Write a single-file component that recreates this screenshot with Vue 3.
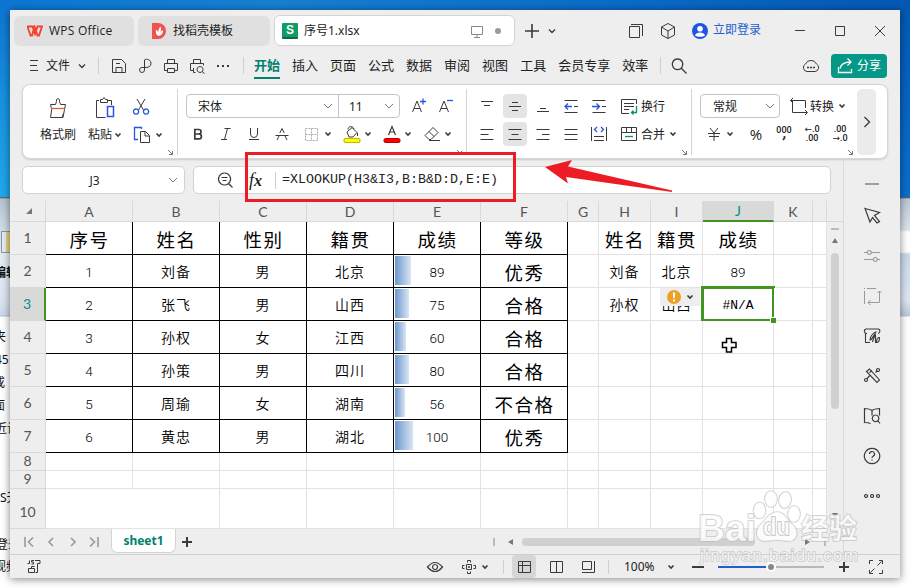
<template>
  <div class="desktop">
    <div class="strip strip-left">
      <i class="folder"></i>
      <span v-for="item in behind" :key="item.top" :class="{ strong: item.strong }" :style="{ top: item.top + 'px', left: item.left + 'px' }">{{ item.text }}</span>
    </div>
    <div class="strip strip-right"></div>

    <div class="window">
      <header class="titlebar">
        <div class="tab tab-home">
          <svg width="16" height="12" viewBox="0 0 16 12"><path d="M.5 1.500h5L8 9l2.500-7.500h4.500L12 10.500h-1.500L7.500 1.500 5 10.500H3.500z" fill="none" stroke="#f5402c" stroke-width="1.800" /></svg>
          <span class="latin">WPS Office</span>
        </div>
        <div class="tab tab-docer">
          <svg width="14" height="16" viewBox="0 0 14 16"><path d="M0 0h6a8 8 0 0 1 0 16H0z" fill="#ef5350" /><path d="M6.5 13C4 12 3.5 9 4 7c1.5.5 2.5 1.5 2.5 3C6 7 7 5 8.5 3.5 9.5 6 9 8 8 9.500 9 8 10 7.500 11 7.500c0 3-1.500 5-4.500 5.500z" fill="#fff" /></svg>
          <span>找稻壳模板</span>
        </div>
        <div class="tab tab-file">
          <span class="sheet-logo">S</span>
          <span class="file-name">序号1.xlsx</span>
          <Icon name="monitor" />
          <i class="dot"></i>
        </div>
        <Icon name="plus" class="new-tab" />
        <Icon name="chevron" class="tab-chevron" />
        <div class="title-right">
          <Icon name="windows" />
          <Icon name="cube" />
          <svg class="avatar" width="16" height="16" viewBox="0 0 16 16"><circle cx="8" cy="8" r="8" fill="#1f55e0" /><circle cx="8" cy="5.8" r="2.8" fill="#fff" /><path d="M3 12.5c1-4 9-4 10 0-2 1.800-8 1.800-10 0z" fill="#fff" /></svg>
          <span class="login">立即登录</span>
          <Icon name="minimize" />
          <Icon name="maximize" />
          <Icon name="close" />
        </div>
      </header>

      <nav class="menu">
        <Icon name="burger" />
        <span class="file-menu">文件</span>
        <Icon name="chevron" class="file-chevron" />
        <i class="vline"></i>
        <div class="quick">
          <Icon v-for="name in quickIcons" :key="name" :name="name" />
        </div>
        <i class="vline"></i>
        <ul class="menu-items">
          <li v-for="item in menuItems" :key="item" :class="{ current: item === activeMenu }" @click="activeMenu = item">{{ item }}</li>
        </ul>
        <i class="vline"></i>
        <Icon name="search" class="search" />
        <Icon name="cloud" class="cloud" />
        <button class="share"><Icon name="share" /><span>分享</span></button>
      </nav>

      <section class="ribbon">
        <div class="group g-clip">
          <div class="big"><Icon name="brush" /><span>格式刷</span></div>
          <div class="big"><Icon name="paste" /><span>粘贴<Icon name="caret" /></span></div>
          <div class="stack">
            <Icon name="cut" />
            <span><Icon name="copy" /><Icon name="caret" /></span>
          </div>
          <Icon name="corner" class="corner" />
        </div>
        <div class="group g-font">
          <div class="row">
            <div class="select font-name">宋体<Icon name="down" /></div>
            <div class="select font-size">11<Icon name="down" /></div>
            <Icon name="fontUp" class="font-up" />
            <Icon name="fontDown" class="font-down" />
          </div>
          <div class="row font-tools">
            <Icon v-for="(name, i) in fontTools" :key="i" :name="name" />
          </div>
          <Icon name="corner" class="corner" />
        </div>
        <div class="group g-align">
          <div class="row align-row">
            <span v-for="name in alignTop" :key="name" :class="{ on: name === 'vMiddle' }"><Icon :name="name" /></span>
            <Icon name="wrap" /><b>换行</b>
          </div>
          <div class="row align-row">
            <span v-for="name in alignBottom" :key="name" :class="{ on: name === 'hCenter' }"><Icon :name="name" /></span>
            <Icon name="merge" /><b>合并</b><Icon name="caret" />
          </div>
          <Icon name="corner" class="corner" />
        </div>
        <div class="group g-number">
          <div class="row">
            <div class="select number-format">常规<Icon name="down" /></div>
            <Icon name="convert" class="convert" /><b>转换</b><Icon name="caret" class="convert-caret" />
          </div>
          <div class="row number-row">
            <Icon name="yen" />
            <Icon name="caret" />
            <span class="percent">%</span>
            <span class="tiny">000<Icon name="comma" /></span>
            <span class="tiny">←.0<br />.00</span>
            <span class="tiny">.00<br />→.0</span>
          </div>
          <Icon name="corner" class="corner" />
        </div>
        <div class="more"><Icon name="right" /></div>
      </section>

      <div class="body">
        <main class="main">
          <div class="formula-row">
            <div class="name-box"><span>J3</span><Icon name="down" /></div>
            <div class="formula-box">
              <Icon name="zoomOut" class="zoom-out" />
              <span class="fx">f<em>x</em></span>
              <i class="vline"></i>
              <span class="formula">=XLOOKUP(H3&amp;I3,B:B&amp;D:D,E:E)</span>
            </div>
          </div>

          <div class="sheet-wrap">
            <div class="sheet">
              <div class="head head-corner"><svg width="8" height="8" viewBox="0 0 8 8"><path d="M7 1v6H1z" fill="#777" /></svg></div>
              <div v-for="col in columns" :key="col" class="head" :class="{ picked: col === 'J' }">{{ col }}</div>
              <template v-for="(row, r) in rows" :key="r">
                <div class="row-head" :class="{ picked: r === 2, tall: r === 9 }">{{ r + 1 }}</div>
                <div
                  v-for="(col, c) in columns"
                  :key="col"
                  class="cell"
                  :class="{ boxed: r < 7 && c < 6, big: isBig(r, c), num: isNumber(row[c]), merged: r === 9 && c === 0, active: r === 2 && col === 'J' }"
                >
                  <i v-if="c === 4 && r > 0 && row[c]" class="bar" :style="{ width: Math.round(row[c] * 0.18) + 'px' }"></i>
                  <span>{{ row[c] }}</span>
                  <i v-if="r === 2 && col === 'J'" class="handle"></i>
                </div>
              </template>
            </div>
            <div class="vscroll">
              <i class="split"></i>
              <i class="up"></i>
              <i class="thumb"></i>
              <i class="down"></i>
            </div>
          </div>

          <div class="sheet-bar">
            <Icon v-for="name in ['first', 'prev', 'next', 'last']" :key="name" :name="name" />
            <div class="sheet-tab">sheet1</div>
            <Icon name="plusBold" class="add-sheet" />
            <div class="hscroll">
              <i class="tick"></i>
              <i class="left"></i>
              <i class="thumb"></i>
              <i class="right"></i>
              <i class="tick"></i>
            </div>
          </div>
        </main>

        <aside class="side">
          <Icon v-for="name in sideIcons" :key="name" :name="name" />
        </aside>
      </div>

      <footer class="status">
        <Icon name="js" class="js" />
        <div class="status-right">
          <Icon name="eye" />
          <Icon name="target" class="target" />
          <Icon name="caret" />
          <i class="vline"></i>
          <span class="view on"><Icon name="viewNormal" /></span>
          <span class="view"><Icon name="viewPage" /></span>
          <span class="view"><Icon name="viewBreak" /></span>
          <i class="vline"></i>
          <span class="zoom-value">100%</span>
          <Icon name="caret" class="zoom-caret" />
          <Icon name="minusBold" />
          <div class="slider"><i></i></div>
          <Icon name="plusBold" class="zoom-in" />
          <Icon name="expand" class="expand" />
        </div>
      </footer>
    </div>

    <!-- error hint next to the active cell -->
    <div class="hint">
      <svg width="14" height="14" viewBox="0 0 14 14"><circle cx="7" cy="7" r="7" fill="#eea127" /><path d="M7 2.5v5.5M7 9.5v2" stroke="#fff" stroke-width="2" /></svg>
      <Icon name="caret" />
    </div>

    <!-- annotations, mouse cursor and watermark -->
    <svg class="overlay" width="910" height="588" viewBox="0 0 910 588">
      <rect x="246.5" y="153.5" width="268" height="47" fill="none" stroke="#ed1c24" stroke-width="3" />
      <path d="M545 167L572 160L568 166.5L672 190.5V192L566 177L568 183.5Z" fill="#ed1c24" />
      <path d="M726.5 338.5h5v4h4.500v5h-4.500v4.500h-5v-4.500h-4v-5h4z" fill="#fff" stroke="#000" stroke-width="1.5" />
      <g class="watermark">
        <text x="698" y="541" class="wm-big" textLength="58" lengthAdjust="spacingAndGlyphs">Bai</text>
        <ellipse cx="759.500" cy="510.500" rx="6" ry="8" />
        <ellipse cx="771" cy="499" rx="6" ry="8" />
        <ellipse cx="785" cy="500" rx="6" ry="8" transform="rotate(10 785 500)" />
        <ellipse cx="794" cy="514" rx="6" ry="8" />
        <path d="M777 512c8 0 10 8 15 12 8 7 5 17-3 17-5 0-8-1-12-1s-7 1-12 1c-9 0-11-10-4-17 5-4 8-12 16-12z" />
        <text x="763" y="535" class="wm-du" textLength="27" lengthAdjust="spacingAndGlyphs">du</text>
        <text x="801" y="539" class="wm-cjk">经验</text>
        <text x="700" y="561" class="wm-url" textLength="158">jingyan.baidu.com</text>
      </g>
    </svg>
  </div>
</template>

<script setup>
import { ref, h } from 'vue';

const blue = '#2456e0';
const green = '#0a9060';
const gray = '#999';

// Each icon is [width, height, ...paths]; a path is a string or { d, c: stroke, w: stroke width }
const icons = {
  monitor: [20, 20, { d: 'M4.5 5.5h11v8h-11zM10 13.5v3M7 16.5h6', c: '#888' }],
  plus: [20, 20, { d: 'M10 3v14M3 10h14', w: 1.6 }],
  plusBold: [12, 12, { d: 'M6 1v10M1 6h10', w: 2 }],
  minusBold: [12, 12, { d: 'M0 6h12', w: 2 }],
  chevron: [10, 10, { d: 'M2 3.5l3 3 3-3', w: 1.3 }],
  down: [12, 12, { d: 'M2 4l4 4 4-4', c: '#777' }],
  caret: [8, 8, { d: 'M1.5 2.5L4 5l2.5-2.5', w: 1.6 }],
  right: [12, 14, { d: 'M3.5 2l5 5-5 5', w: 1.3 }],
  windows: [20, 20, 'M3.5 5.5h10v11h-10zM5 3.5h11.5V15'],
  cube: [20, 20, 'M10 2.5l6.500 3.500v8L10 17.500 3.500 14V6zM3.500 6L10 10l6.500-4M10 10v7.500'],
  minimize: [40, 20, 'M15 9.5h10'],
  maximize: [40, 20, 'M15.5 5.5h9v9h-9z'],
  close: [40, 20, 'M15 5l10 10M25 5L15 15'],
  burger: [10, 14, 'M1 1.5h8M1 6.5h7M1 11.5h8'],
  save: [26, 20, 'M6.5 3.5h9l4 4v9h-13zM10 16.5v-5h6v5M10 7.5h4'],
  publish: [26, 20, 'M12.5 10V4c0-1 6-1.500 6.500 3 0 3-2 4.500-5 4.500H9.800a2.500 2.500 0 1 0 2.700 2.500V10'],
  print: [26, 20, 'M9.5 7V3.5h7V7M9 14.5H6.5V7.5h13v7H17M9.5 12.5h7v4h-7z'],
  preview: [26, 20, 'M9.5 7V3.5h7V7M10 14.5H6.5V7.5h13v2M9.5 12v4.5h2', 'M16 10.5a3 3 0 1 0 .1 0M18 15.5l2.500 2'],
  dots: [26, 20, { d: 'M7 10h2M12 10h2M17 10h2', w: 1.8 }],
  search: [20, 20, { d: 'M8.5 3a5.300 5.300 0 1 0 .1 0M12.500 12.500l5 5', w: 1.3 }],
  cloud: [20, 20, 'M6 15.5a4 4 0 0 1-1.500-7.500 6 6 0 0 1 11 0 4 4 0 0 1-1.500 7.500z', { d: 'M6 11.5h2M9 11.5h2M12 11.5h2', w: 1.6 }],
  share: [20, 20, { d: 'M3.5 11v5.500h13V13M5 12.500c1-5 5-6.500 11-6.500M12.500 2.500L16 6l-3.500 3.500', c: '#fff', w: 1.3 }],
  brush: [24, 24, 'M4.5 8.5h5l1-3V3.500q1.500-2 3 0v2l1 3h5l-1 5-1.500 8h-12.500l1.200-8zM16 21.500l1.500-4', { d: 'M5 12.500h13', c: '#d8623a', w: 1.3 }],
  paste: [24, 24, 'M6 4.5H3.5v17h9M14 4.5h4.5V9M7.5 3.5h2l1.500-2 1.500 2h2v3h-7z', { d: 'M14.5 10.5h6v10h-6z', c: blue, w: 1.5 }],
  cut: [20, 20, 'M6 2l6.500 11M14 2L7.500 13', { d: 'M5 12a2.600 2.600 0 1 0 .1 0M15 12a2.600 2.600 0 1 0 .1 0', c: blue, w: 1.3 }],
  copy: [20, 20, { d: 'M6 14.5H2.5v-12h7V4', c: blue, w: 1.3 }, 'M8.5 6.5h5l4 4v7h-9zM13 7v4h4'],
  corner: [7, 7, { d: 'M1 1l4.500 4.500M5.500 2v3.500H2', c: '#777' }],
  comma: [6, 6, { d: 'M3.5 1v2L2 5', w: 1.8 }],
  fontUp: [18, 18, 'M2.5 15L7 4l4.500 11M4 11.500h6', { d: 'M13 1.5v6M10 4.5h6', c: blue, w: 1.3 }],
  fontDown: [18, 18, 'M2.5 15L7 4l4.500 11M4 11.500h6', { d: 'M10 3.5h6', c: blue, w: 1.3 }],
  bold: [28, 20, { d: 'M10.8 5.500h4a2.200 2.200 0 0 1 0 4.500h-4zM10.800 10H15a2.300 2.300 0 0 1 0 4.800h-4.200z', w: 1.7 }],
  italic: [28, 20, 'M12.5 4.500h6M9 15.500h6M15.500 4.500l-3 11'],
  underline: [28, 20, 'M10.5 4v6a3.500 3.500 0 0 0 7 0V4M9 15.500h10'],
  strike: [28, 20, 'M7.5 11.500h13M11.800 9L14 4.500 16.200 9M11 12l-2 4M17 12l2 4'],
  border: [24, 20, { d: 'M5.5 4.500h12v12h-12zM11.500 4.500v12M5.500 10.500h12', c: '#aaa', dash: '2 1' }],
  fill: [24, 20, 'M7 8l5-4.500 5 5-4 4.500H9zM8 5.500C8 2 13 1.500 14 5M17.500 9v3', { d: 'M6 16.500h12', c: '#a5a500', w: 5, cap: 1 }, { d: 'M6 16.500h12', c: '#ff0', w: 3.5, cap: 1 }],
  color: [24, 20, { d: 'M8.5 11L12 2.500l3.500 8.500M9.800 8h4.400', w: 1.2 }, { d: 'M6 16.500h12', c: '#a00', w: 5, cap: 1 }, { d: 'M6 16.500h12', c: '#f00', w: 3.5, cap: 1 }],
  eraser: [24, 20, 'M5 11.500l8-8 5 5-7 7H9zM9 7.500l5 5M9 16.500h11'],
  vTop: [20, 20, 'M4 5.500h12M7 9.500h6'],
  vMiddle: [20, 20, 'M7 6.500h6M4 10.500h12M7 14.500h6'],
  vBottom: [20, 20, 'M7 12.500h6M4 15.500h12'],
  outdent: [20, 20, 'M3.5 4.500h13M13 10.500h4M3.500 16.500h13', { d: 'M11 10.500H4M7 7.500l-3 3 3 3', c: blue, w: 1.3 }],
  indent: [20, 20, 'M3.5 4.500h13M13 10.500h4M3.500 16.500h13', { d: 'M3 10.500h7M7.500 7.500l3 3-3 3', c: blue, w: 1.3 }],
  hLeft: [20, 20, 'M3.5 5.500h13M3.500 10.500h8M3.500 15.500h13'],
  hCenter: [20, 20, 'M3.5 5.500h13M6.500 10.500h7M3.500 15.500h13'],
  hRight: [20, 20, 'M3.5 5.500h13M9 10.500h7.500M3.500 15.500h13'],
  justify: [20, 20, 'M3.5 5.500h13M3.500 10.500h13M3.500 15.500h13'],
  distribute: [20, 20, 'M2.5 3v14M17.500 3v14M5 12.500h10M5 16.500h10', { d: 'M8 3L5.500 5.500 8 8M12 3l2.500 2.500L12 8', c: blue, w: 1.3 }],
  wrap: [20, 20, 'M17.5 8V3.500h-15v14H10M5 7.500h10M5 10.500h10M5 13.500h5', { d: 'M17.5 10v6.500h-5M14.500 14.500l-2 2 2 2', c: green, w: 1.3 }],
  merge: [20, 20, 'M2.5 3.500h15v13h-15zM2.500 8.500h15M7.500 3.500v5M12.500 3.500v5', { d: 'M6 12.500h8', c: green, w: 1.3 }],
  convert: [20, 20, 'M5.500 4.500h11V12M14 16.500H3.500V5M4 2L1.500 4.500 4 7M1.500 4.500H6M16 14l2.500 2.500L16 19M13 16.500h5'],
  yen: [20, 20, 'M6 4l4 5 4-5M4 9.500h12M5 12.500h10M10 9v8'],
  zoomOut: [20, 20, { d: 'M9.5 3a6 6 0 1 0 .1 0M13.500 13.500l4 4M6.500 7.500h6M7.500 10.500h4', w: 1.2 }],
  first: [22, 14, { d: 'M7 2v10M15 2.500L10.500 7l4.500 4.500', c: gray, w: 1.6 }],
  prev: [22, 14, { d: 'M13 3L9 7l4 4', c: gray, w: 1.6 }],
  next: [22, 14, { d: 'M9 3l4 4-4 4', c: gray, w: 1.6 }],
  last: [22, 14, { d: 'M14 2v10M6 2.500L10.500 7 6 11.500', c: gray, w: 1.6 }],
  dash: [20, 24, { d: 'M3 12h14', c: '#888', w: 1.6 }],
  pointer: [20, 40, { d: 'M3 12.500l14.500 4-5 3 5 6-2.500 1.500-4.500-5.500-2.500 4.500z', w: 1.2 }],
  sliders: [20, 40, { d: 'M2 16.500h3.500M9 16.500h9M2 23.500h9M15 23.500h3M7.300 14.500a2 2 0 1 0 .1 0M13.300 21.500a2 2 0 1 0 .1 0', c: gray, w: 1.2 }],
  transform: [20, 40, { d: 'M2.5 15v13M2 12.500h1M5 12.500h9M17.500 15v11M15.500 17l2-2 2 2M17.500 26.500H6M8.500 24L6 26.500l2.500 2.500', c: gray }],
  mural: [20, 40, { d: 'M5 17.500C2 18 1.500 13.500 4 13h12c3 .5 2 4 0 4.500M3.500 17.500v9H8M8 24c0-4 4-8 6-8-3 4-4 8-6 8zM10.500 26c1-4 2-6 3-7v8M14.500 26.500c0-4 2-5 3-5 0 3-1 5-3 5z', w: 1.1 }],
  tools: [20, 40, { d: 'M4.5 15.500l3-2.500 10 11-2.500 2.500zM8 19.500l-3 3M13.500 16.500l2-2M7.500 16.500l2.500-2M4 22.500a1.500 1.500 0 1 0 .1 0M16 12.500a1.500 1.500 0 1 0 .1 0', w: 1.1 }],
  book: [20, 40, { d: 'M10 14.500C8 12.500 5 13 2.500 12.500v14c2 0 4 0 6 1M10 14.500c2-2 5-1.500 7.500-2v7M10 14.500v5M13.500 19a3.300 3.300 0 1 0 .1 0M16 25l2 2.500', w: 1.2 }],
  help: [20, 40, { d: 'M10 12.300a7.700 7.700 0 1 0 .1 0M7.500 18a2.500 2.500 0 1 1 3.500 2.300q-1 .5-1 1.700M10 23.500v1', w: 1.2 }],
  ellipsis: [20, 40, { d: 'M4 18.500a1.500 1.500 0 1 0 .1 0M10 18.500a1.500 1.500 0 1 0 .1 0M16 18.500a1.500 1.500 0 1 0 .1 0', w: 1.2 }],
  js: [16, 16, 'M3.5 1.500v3H1.500M8 1.500H5.500V3h2v2H5.500M9 1.500h5v3h-2.500v9H9.500M2.500 13.500v-4h6v4zM5.500 9.500v-2h3'],
  eye: [18, 18, { d: 'M1.5 9q7.500-9 15 0-7.500 9-15 0zM9 6.500a2.500 2.500 0 1 0 .1 0', w: 1.2 }],
  target: [16, 16, 'M5.5 5.500h5v5h-5zM6.500 3.500v-2h3v2M6.500 12.500v2h3v-2M3.500 6.500h-2v3h2M12.500 6.500h2v3h-2M8 7v2M7 8h2'],
  viewNormal: [16, 16, 'M2.5 2.500h12v11h-12zM6.500 2.500v11M2.500 6.500h12'],
  viewPage: [16, 16, 'M2.5 2.500h12v11h-12zM8.500 2.500v11'],
  viewBreak: [16, 16, 'M2.5 2.500h9v8h-9zM14.500 2v11.500H2'],
  expand: [16, 16, 'M1.5 5V1.500H5M11 1.500h3.500V5M14.500 11v3.500H11M5 14.500H1.500V11M9.500 6.500l4-4M6.500 9.500l-4 4'],
};

const Icon = ({ name }) => {
  const [width, height, ...paths] = icons[name];
  return h('svg', { width, height, viewBox: `0 0 ${width} ${height}`, class: 'icon' }, paths.map((p) => {
    const o = typeof p === 'string' ? { d: p } : p;
    return h('path', {
      d: o.d,
      fill: 'none',
      stroke: o.c || '#3a3a3a',
      'stroke-width': o.w || 1,
      'stroke-dasharray': o.dash,
      'stroke-linecap': o.cap ? 'round' : undefined,
    });
  }));
};
Icon.props = ['name'];

const quickIcons = ['save', 'publish', 'print', 'preview', 'dots'];
const menuItems = ['开始', '插入', '页面', '公式', '数据', '审阅', '视图', '工具', '会员专享', '效率'];
const activeMenu = ref('开始');
const fontTools = ['bold', 'italic', 'underline', 'strike', 'border', 'caret', 'fill', 'caret', 'color', 'caret', 'eraser', 'caret'];
const alignTop = ['vTop', 'vMiddle', 'vBottom', 'outdent', 'indent'];
const alignBottom = ['hLeft', 'hCenter', 'hRight', 'justify', 'distribute'];
const sideIcons = ['dash', 'pointer', 'sliders', 'transform', 'mural', 'tools', 'book', 'help', 'ellipsis'];

const columns = ['A', 'B', 'C', 'D', 'E', 'F', 'G', 'H', 'I', 'J', 'K', ''];
const rows = ref([
  ['序号', '姓名', '性别', '籍贯', '成绩', '等级', '', '姓名', '籍贯', '成绩'],
  [1, '刘备', '男', '北京', 89, '优秀', '', '刘备', '北京', 89],
  [2, '张飞', '男', '山西', 75, '合格', '', '孙权', '山西', '#N/A'],
  [3, '孙权', '女', '江西', 60, '合格'],
  [4, '孙策', '男', '四川', 80, '合格'],
  [5, '周瑜', '女', '湖南', 56, '不合格'],
  [6, '黄忠', '男', '湖北', 100, '优秀'],
  [],
  [],
  [],
]);

const isBig = (r, c) => r === 0 || c === 5;
const isNumber = (value) => typeof value === 'number';

// pieces of the windows behind
const behind = [
  { text: '编辑', top: 264, left: -6, strong: true },
  { text: '夹', top: 328, left: -6 },
  { text: '45', top: 351, left: -5 },
  { text: '或', top: 374, left: -7 },
  { text: '面', top: 397, left: -7 },
  { text: '近设', top: 420, left: -5 },
  { text: 'S无', top: 489, left: 0 },
  { text: '登录', top: 536, left: -4 },
  { text: '视频', top: 558, left: -6 },
];
</script>

<style>
body {
  overflow: hidden;
}
</style>

<style scoped>
.desktop {
  position: relative;
  box-sizing: border-box;
  width: 910px;
  height: 588px;
  padding: 10px;
  background: linear-gradient(90deg, #0d76d4, #1680d2 30%, #0a6ac8 70%, #0459b4);
  font-family: "Noto Sans", "Noto Sans CJK SC", sans-serif;
  font-size: 12px;
  color: #222;
  overflow: hidden;
}
.desktop * {
  box-sizing: border-box;
}
i,
em,
b {
  font-style: normal;
  font-weight: normal;
}
.icon {
  flex: none;
  display: block;
}
.strip {
  position: absolute;
  top: 0;
  bottom: 0;
  width: 455px;
  clip-path: inset(10px 0 0 0);
}
.strip-left {
  left: 0;
  background: linear-gradient(#0e72d2, #1792e0 100px, #21a8ec 197px, #34495c 197px, #b4c2d0 199px, #d3dee9 230px, #e4edf5 254px, #dde6f0 300px, #ccd8ec 315px, #a9bdd2 316px, #fff 317px);
}
.strip-right {
  right: 0;
  background: linear-gradient(#0459b4, #0a6fd0 197px, #2c4560 197px, #b9c6d3 199px, #dce5ee 230px, #fff 232px, #fff 252px, #c9d9ea 254px, #dde6f4 300px, #b8c8da 316px, #fff 317px);
}
.strip span {
  position: absolute;
  font-size: 12px;
  line-height: 18px;
  color: #111;
  white-space: nowrap;
}
.strip .strong {
  font-weight: bold;
}
.folder {
  position: absolute;
  left: 1px;
  top: 231px;
  width: 14px;
  height: 22px;
  border: 1px solid #8a97a3;
  background: linear-gradient(90deg, #e6edf3 4px, #e5d283 4px);
}
.window {
  position: relative;
  width: 890px;
  height: 568px;
  display: flex;
  flex-direction: column;
  background: #eee;
  box-shadow: 0 1px 8px rgba(0, 0, 0, 0.5);
}
.titlebar {
  display: flex;
  align-items: center;
  height: 41px;
  padding-left: 4px;
}
.tab {
  display: flex;
  align-items: center;
  height: 30px;
  margin-right: 4px;
  border-radius: 6px;
  background: #e0e0e0;
  line-height: 30px;
}
.tab-home {
  width: 120px;
  padding-left: 13px;
  gap: 6px;
}
.tab-docer {
  width: 132px;
  padding-left: 14px;
  gap: 7px;
}
.latin {
  font-family: "Open Sans", sans-serif;
  letter-spacing: 0.25px;
}
.tab-file {
  width: 241px;
  height: 31px;
  margin-right: 0;
  padding-left: 7px;
  background: #fff;
  border: 1px solid #d4d4d4;
}
.sheet-logo {
  width: 16px;
  height: 16px;
  margin-right: 6px;
  border-radius: 1px;
  background: linear-gradient(#129b67 14px, #0b6b49 14px);
  color: #fff;
  font: bold 12px/15px "Liberation Sans", sans-serif;
  text-align: center;
}
.file-name {
  width: 163px;
}
.dot {
  width: 6px;
  height: 6px;
  margin-left: 8px;
  border-radius: 50%;
  background: #999;
}
.new-tab {
  margin-left: 7px;
}
.tab-chevron {
  margin-left: 5px;
}
.title-right {
  display: flex;
  align-items: center;
  margin-left: auto;
}
.title-right > .icon:nth-child(2) {
  margin: 0 14px 0 12px;
}
.login {
  width: 72px;
  padding: 0 0 1px 5px;
  color: #1f5fd0;
  line-height: 20px;
}
.menu {
  display: flex;
  align-items: center;
  height: 29px;
  padding-left: 19px;
}
.file-menu {
  margin-left: 7px;
  padding-bottom: 2px;
}
.file-chevron {
  margin: 0 11px 0 7px;
}
.vline {
  flex: none;
  width: 1px;
  height: 17px;
  background: #cfcfcf;
}
.quick {
  display: flex;
  margin: 0 7px;
}
.menu-items {
  display: flex;
  gap: 12px;
  margin: 0 12px 0 10px;
  padding: 0;
  list-style: none;
  font-size: 13px;
  line-height: 22px;
  white-space: nowrap;
}
.menu-items li {
  height: 27px;
  padding-top: 2px;
  border-bottom: 2px solid transparent;
}
.menu-items .current {
  color: #00806e;
  font-weight: bold;
  border-color: #00806e;
}
.search {
  margin-left: 8px;
}
.cloud {
  margin-left: auto;
  margin-right: 10px;
}
.share {
  display: flex;
  align-items: center;
  width: 56px;
  height: 24px;
  margin-right: 13px;
  padding: 0 0 0 4px;
  gap: 2px;
  border: 0;
  border-radius: 4px;
  background: #069887;
  color: #fff;
  font: inherit;
  white-space: nowrap;
}
.share span {
  padding-bottom: 2px;
}
.ribbon {
  display: flex;
  flex: none;
  height: 75px;
  margin: 4px 12px 0 12px;
  padding-top: 4px;
  border: 1px solid #d6d6d6;
  border-radius: 8px;
  background: #fff;
  box-shadow: 0 1px 2px rgba(0, 0, 0, 0.15);
}
.group {
  position: relative;
  height: 66px;
  border-right: 1px solid #d4d4d4;
}
.group .corner {
  position: absolute;
  right: 3px;
  bottom: -1px;
}
.g-clip {
  display: flex;
  width: 155px;
}
.g-font {
  width: 289px;
}
.g-align {
  width: 225px;
}
.g-number {
  width: 165px;
  border: 0;
}
.big {
  display: flex;
  flex-direction: column;
  align-items: center;
}
.g-clip .big {
  width: 36px;
  margin-left: 17px;
  padding-top: 7px;
  white-space: nowrap;
}
.g-clip .big span {
  display: flex;
  align-items: center;
  gap: 2px;
  margin-top: 6px;
  line-height: 18px;
}
.g-clip .big + .big {
  width: 34px;
  margin-left: 12px;
}
.stack {
  margin-left: 9px;
  padding-top: 8px;
}
.stack > span {
  display: flex;
  align-items: center;
  gap: 3px;
  margin: 8px 0 0 1px;
}
.row {
  display: flex;
  align-items: center;
  height: 24px;
  margin-bottom: 4px;
}
.group > .row:first-child {
  margin-top: 5px;
}
.select {
  display: flex;
  align-items: center;
  justify-content: space-between;
  height: 24px;
  padding: 0 4px 0 11px;
  border: 1px solid #c4c4c4;
  background: #fff;
}
.font-name {
  width: 153px;
  margin-left: 8px;
  border-radius: 4px 0 0 4px;
}
.font-size {
  width: 62px;
  margin-left: -1px;
  padding-left: 10px;
  border-radius: 0 4px 4px 0;
}
.font-up {
  margin-left: 10px;
}
.font-down {
  margin-left: 9px;
}
.font-tools {
  padding-left: 6px;
}
.font-tools .icon:nth-child(5) {
  margin-left: 4px;
}
.font-tools .icon:nth-child(2n + 7) {
  margin-left: 8px;
}
.g-align .row {
  padding-left: 8px;
}
.align-row span {
  display: flex;
  align-items: center;
  justify-content: center;
  width: 24px;
  height: 24px;
  margin-right: 4px;
  border-radius: 4px;
}
.align-row .on {
  background: #e4e4e4;
}
.align-row > .icon {
  margin-left: 4px;
}
.align-row b {
  margin: 0 0 0 2px;
}
.number-format {
  width: 80px;
  margin-left: 8px;
  padding: 0 3px 0 12px;
  border-radius: 4px;
}
.convert {
  margin: 0 1px 0 9px;
}
.convert-caret {
  margin-left: 4px;
}
.number-row {
  display: grid;
  grid-template-columns: 28px 4px 38px 28px 28px 28px;
  align-items: center;
  justify-items: center;
  padding-left: 8px;
}
.percent {
  padding-left: 10px;
  font: 15px/20px "Open Sans", sans-serif;
}
.tiny {
  font: 500 9px/9px "Roboto", "DejaVu Sans", sans-serif;
  text-align: center;
  white-space: nowrap;
}
.tiny .icon {
  margin: 0 auto 2px;
}
.more {
  display: flex;
  align-items: center;
  justify-content: center;
  width: 19px;
  height: 66px;
  border-radius: 5px;
  background: #ebebeb;
}
.body {
  display: flex;
  flex: none;
  height: 395px;
}
.main {
  width: 833px;
}
.formula-row {
  display: flex;
  gap: 8px;
  padding: 7px 12px 7px;
}
.name-box,
.formula-box {
  display: flex;
  align-items: center;
  height: 28px;
  border: 1px solid #d2d2d2;
  border-radius: 5px;
  background: #fff;
}
.name-box {
  width: 163px;
  padding-right: 5px;
}
.name-box span {
  flex: 1;
  padding-right: 1px;
  text-align: center;
}
.formula-box {
  width: 638px;
}
.zoom-out {
  margin-left: 21px;
}
.fx {
  width: 40px;
  padding-left: 14px;
  font: italic 18px/26px "Liberation Serif", serif;
}
.fx em {
  font-size: 16px;
  font-style: italic;
  font-weight: bold;
}
.formula {
  margin-left: 6px;
  font: 13.33px/24px "Liberation Mono", monospace;
}
.sheet-wrap {
  display: flex;
  height: 328px;
}
.sheet {
  display: grid;
  grid-template-columns: 36px repeat(6, 87px) 31px 52px 52px 71px 39px 14px;
  grid-template-rows: 21px repeat(7, 33px) 18px 18px 40px;
  width: 817px;
}
.head,
.row-head {
  display: flex;
  align-items: center;
  justify-content: center;
  border: 0 solid #d9d9d9;
  border-right-width: 1px;
  border-bottom-width: 1px;
  color: #555;
  font-family: "Lato", sans-serif;
  font-size: 14px;
}
.row-head {
  padding-bottom: 2px;
}
.row-head.tall {
  padding: 5px 0 0;
}
.head-corner svg {
  margin-left: 2px;
}
.head.picked {
  background: #d9d9d9;
  color: #00907e;
  border-bottom: 2px solid #3f9422;
}
.row-head.picked {
  background: #d9d9d9;
  color: #00907e;
  border-right: 2px solid #3f9422;
}
.cell {
  position: relative;
  display: flex;
  align-items: center;
  justify-content: center;
  border: 0 solid #e2e2e2;
  border-right-width: 1px;
  border-bottom-width: 1px;
  background: #fff;
  color: #000;
  font-family: "Noto Sans CJK SC", sans-serif;
  font-size: 14px;
  font-weight: 350;
  letter-spacing: 1px;
  white-space: nowrap;
}
.cell span {
  line-height: 20px;
}
.cell.boxed {
  border-color: #000;
}
.cell.big {
  padding: 2px 0 0 1px;
  font-size: 18.5px;
  font-weight: 400;
  letter-spacing: 1.5px;
}
.cell.num {
  padding-top: 2px;
  font-family: "Roboto", sans-serif;
  font-size: 13.5px;
  font-weight: 300;
  letter-spacing: 0;
}
.cell.merged {
  border-right-color: #fff;
}
.cell.active {
  padding-top: 3px;
  font-family: "Liberation Mono", monospace;
  font-size: 13px;
  font-weight: 400;
  letter-spacing: 0;
}
.cell.active::after {
  content: "";
  position: absolute;
  inset: -2px;
  border: 3px solid #3f9422;
}
.handle {
  position: absolute;
  right: -3px;
  bottom: -3px;
  z-index: 1;
  width: 6px;
  height: 6px;
  border: 1px solid #fff;
  border-width: 1px 0 0 1px;
  background: #3f9422;
}
.bar {
  position: absolute;
  left: 1px;
  top: 1px;
  height: 29px;
  background: linear-gradient(90deg, #6c97cd, #dae5f4);
}
.vscroll {
  display: flex;
  flex-direction: column;
  align-items: center;
  width: 16px;
  margin-top: 20px;
  border-top: 1px solid #d9d9d9;
}
.split {
  width: 8px;
  height: 2px;
  margin-top: 6px;
  background: #bbb;
}
.up,
.down {
  border: 3px solid transparent;
}
.up {
  margin-top: 5px;
  border-bottom: 5px solid #777;
}
.down {
  margin-top: 104px;
  border-top: 5px solid #777;
}
.vscroll .thumb {
  width: 8px;
  height: 156px;
  margin-top: 10px;
  border-radius: 4px;
  background: #d0d0d0;
}
.sheet-bar {
  display: flex;
  align-items: center;
  height: 25px;
  padding-left: 8px;
}
.sheet-tab {
  align-self: flex-start;
  width: 65px;
  height: 24px;
  margin-left: 5px;
  border: 1px solid #d4d4d4;
  border-top: 0;
  border-radius: 0 0 6px 6px;
  background: #fff;
  color: #00806e;
  font: bold 12px/23px "Noto Sans", sans-serif;
  text-align: center;
}
.add-sheet {
  margin-left: 5px;
}
.hscroll {
  display: flex;
  align-items: center;
  margin-left: 300px;
}
.tick {
  width: 2px;
  height: 8px;
  background: #bbb;
}
.left,
.right {
  border: 3px solid transparent;
}
.left {
  margin-left: 10px;
  border-right: 5px solid #777;
}
.hscroll .thumb {
  width: 233px;
  height: 8px;
  margin-left: 9px;
  border-radius: 4px;
  background: #d0d0d0;
}
.right {
  margin: 0 11px 0 50px;
  border-left: 5px solid #777;
}
.side {
  width: 57px;
  padding: 13px 0 0 18px;
  border-left: 1px solid #dadada;
}
.status {
  display: flex;
  align-items: center;
  height: 24px;
  border-top: 1px solid #d0d0d0;
}
.js {
  margin-left: 16px;
}
.status-right {
  display: flex;
  align-items: center;
  margin-left: 384px;
}
.target {
  margin: 0 4px 0 17px;
}
.status .vline {
  height: 14px;
  margin: 0 8px 0 14px;
}
.view {
  display: flex;
  align-items: center;
  justify-content: center;
  width: 24px;
  height: 23px;
  margin-right: 8px;
  border-radius: 4px;
}
.view.on {
  background: #d6d6d6;
}
.status .view + .vline {
  margin: 0 15px 0 0;
}
.zoom-value {
  width: 34px;
}
.zoom-caret {
  margin: 0 17px 0 9px;
}
.slider {
  width: 106px;
  height: 2px;
  margin: 0 14px;
  background: linear-gradient(90deg, #1f5fd0 50%, #b8b8b8 50%);
}
.slider i {
  display: block;
  width: 10px;
  height: 10px;
  margin: -4px 0 0 48px;
  border: 2px solid #fff;
  border-radius: 50%;
  background: #888;
}
.expand {
  margin-left: 18px;
}
.hint {
  position: absolute;
  left: 660px;
  top: 288px;
  display: flex;
  align-items: center;
  gap: 5px;
  width: 40px;
  height: 18px;
  padding-left: 7px;
  background: #eee;
}
.overlay {
  position: absolute;
  left: 0;
  top: 0;
}
.watermark {
  fill: rgba(255, 255, 255, 0.8);
  stroke: rgba(180, 180, 180, 0.65);
  stroke-width: 1.6;
  paint-order: stroke;
}
.wm-big {
  font: bold 36px "Liberation Sans", sans-serif;
}
.wm-du {
  font: bold 24px "Liberation Sans", sans-serif;
  stroke: rgba(150, 150, 150, 0.6);
}
.wm-cjk {
  font: bold 28px "Noto Sans CJK SC", sans-serif;
}
.wm-url {
  font: 17px "Liberation Sans", sans-serif;
}
</style>
